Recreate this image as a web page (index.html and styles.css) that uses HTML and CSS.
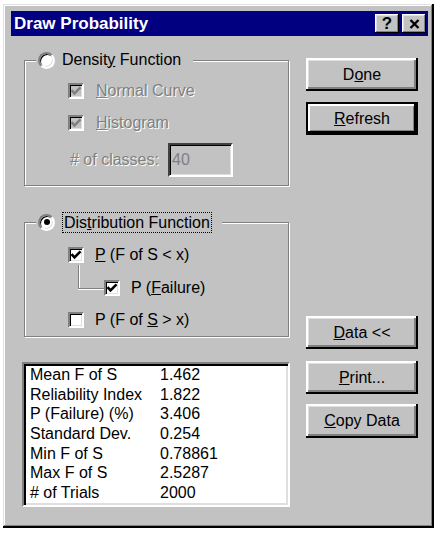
FILE: index.html
```html
<!DOCTYPE html>
<html lang="en">
<head>
    <meta charset="UTF-8">
    <meta name="viewport" content="width=device-width, initial-scale=1.0">
    <title>Draw Probability</title>
    <link rel="stylesheet" href="styles.css">
</head>
<body>
    <div class="dialog">
        <div class="titlebar">
            <span class="title">Draw Probability</span>
            <div class="title-buttons">
                <span class="tbtn">?</span>
                <span class="tbtn">
                    <svg width="11" height="10" viewBox="0 0 11 10"><path d="M1.5 1 L9.5 9 M9.5 1 L1.5 9" stroke="#000" stroke-width="2.4"/></svg>
                </span>
            </div>
        </div>

        <div class="content">
            <div class="left">
                <!-- density group (disabled) -->
                <div class="group group-density">
                    <div class="group-title">
                        <span class="radio"></span>
                        <span>Densit<u>y</u> Function</span>
                    </div>
                    <div class="check-row disabled row-first">
                        <span class="check"><svg width="12" height="12" viewBox="0 0 12 12"><polyline points="1.5,5.2 4.5,8.4 10.5,2.4" fill="none" stroke-width="2.6"/></svg></span>
                        <span class="label"><u>N</u>ormal Curve</span>
                    </div>
                    <div class="check-row disabled row-second">
                        <span class="check"><svg width="12" height="12" viewBox="0 0 12 12"><polyline points="1.5,5.2 4.5,8.4 10.5,2.4" fill="none" stroke-width="2.6"/></svg></span>
                        <span class="label"><u>H</u>istogram</span>
                    </div>
                    <div class="classes-row">
                        <span class="label">#&nbsp;of classes:</span>
                        <span class="textbox">40</span>
                    </div>
                </div>

                <!-- distribution group -->
                <div class="group group-dist">
                    <div class="group-title">
                        <span class="radio checked"></span>
                        <span class="focus">Dis<u>t</u>ribution Function</span>
                    </div>
                    <div class="check-row dist-first">
                        <span class="check"><svg width="12" height="12" viewBox="0 0 12 12"><polyline points="1.5,5.2 4.5,8.4 10.5,2.4" fill="none" stroke-width="2.6"/></svg></span>
                        <span class="label"><u>P</u> (F of S &lt; x)</span>
                    </div>
                    <div class="check-row sub-row">
                        <span class="tree-line"></span>
                        <span class="check"><svg width="12" height="12" viewBox="0 0 12 12"><polyline points="1.5,5.2 4.5,8.4 10.5,2.4" fill="none" stroke-width="2.6"/></svg></span>
                        <span class="label">P (<u>F</u>ailure)</span>
                    </div>
                    <div class="check-row dist-last">
                        <span class="check"></span>
                        <span class="label">P (F of <u>S</u> &gt; x)</span>
                    </div>
                </div>

                <div class="results">
                    <span>Mean F of S</span><span>1.462</span>
                    <span>Reliability Index</span><span>1.822</span>
                    <span>P (Failure) (%)</span><span>3.406</span>
                    <span>Standard Dev.</span><span>0.254</span>
                    <span>Min F of S</span><span>0.78861</span>
                    <span>Max F of S</span><span>2.5287</span>
                    <span># of Trials</span><span>2000</span>
                </div>
            </div>

            <div class="right">
                <button class="btn">D<u>o</u>ne</button>
                <button class="btn btn-default btn-refresh"><u>R</u>efresh</button>
                <button class="btn btn-data"><u>D</u>ata &lt;&lt;</button>
                <button class="btn btn-print"><u>P</u>rint...</button>
                <button class="btn btn-copy"><u>C</u>opy Data</button>
            </div>
        </div>
    </div>
</body>
</html>
```

FILE: styles.css
```css
body {
    margin: 0;
    background: #fff;
    font-family: "Liberation Sans", Arial, sans-serif;
    font-size: 16px;
    color: #000;
}

.dialog {
    width: 431px;
    height: 524px;
    margin: 4px 0 0 3px;
    box-sizing: border-box;
    padding: 7px 6px 0 8px;
    background: #c2c2c2;
    box-shadow: inset -2px -2px #000, inset 1px 1px #dfdfdf, inset -3px -3px #808080, inset 2px 2px #fff;
}

/* title bar */
.titlebar {
    display: flex;
    align-items: center;
    justify-content: space-between;
    height: 25px;
    padding: 0 2px 0 3px;
    background: #000080;
    color: #fff;
}

.title {
    font-weight: bold;
    font-size: 17px;
}

.title-buttons {
    display: flex;
    gap: 3px;
}

.tbtn {
    width: 24px;
    height: 19px;
    display: flex;
    align-items: center;
    justify-content: center;
    background: #c2c2c2;
    color: #000;
    font-weight: bold;
    font-size: 17px;
    box-shadow: inset -1px -1px #000, inset 1px 1px #fff, inset -2px -2px #808080, inset 2px 2px #dfdfdf;
}

.content {
    display: flex;
    padding-left: 11px;
}

.left {
    width: 268px;
    display: flex;
    flex-direction: column;
}

/* etched group boxes */
.group {
    width: 265px;
    margin-left: 2px;
    box-sizing: border-box;
    border: 1px solid #808080;
    box-shadow: inset 1px 1px #fff, 1px 1px #fff;
    display: flex;
    flex-direction: column;
    align-items: flex-start;
}

.group-density {
    margin-top: 24px;
    padding-bottom: 8px;
}

.group-dist {
    margin-top: 36px;
    padding-bottom: 6px;
}

.group-title {
    display: flex;
    align-items: center;
    height: 20px;
    margin: -11px 0 0 11px;
    padding: 0 12px 0 2px;
    background: #c2c2c2;
}

.group-dist .group-title {
    padding-right: 10px;
}

.focus {
    border: 1px dotted #000;
    padding: 0 1px;
    line-height: 19px;
}

.radio {
    width: 17px;
    height: 17px;
    box-sizing: border-box;
    flex-shrink: 0;
    margin-right: 7px;
    border-radius: 50%;
    border: 2px solid;
    border-color: #808080 #fff #fff #808080;
    background: #fff;
    box-shadow: inset 1px 1px #000, inset -1px -1px #dfdfdf;
    display: flex;
    align-items: center;
    justify-content: center;
}

.radio.checked::after {
    content: "";
    width: 6px;
    height: 6px;
    border-radius: 50%;
    background: #000;
}

/* checkboxes */
.check-row {
    display: flex;
    align-items: center;
    height: 20px;
    margin-left: 43px;
}

.check {
    width: 16px;
    height: 16px;
    box-sizing: border-box;
    flex-shrink: 0;
    margin-right: 12px;
    border: 2px solid;
    border-color: #808080 #fff #fff #808080;
    background: #fff;
    box-shadow: inset 1px 1px #000, inset -1px -1px #dfdfdf;
    display: flex;
    align-items: center;
    justify-content: center;
}

.check svg {
    stroke: #000;
}

.disabled .check {
    background: #c2c2c2;
}

.disabled .check svg {
    stroke: #808080;
}

.disabled .label,
.classes-row .label {
    color: #808080;
    text-shadow: 1px 1px #fff;
}

.row-first { margin-top: 11px; }
.row-second { margin-top: 12px; }
.dist-first { margin-top: 13px; }
.dist-last { margin-top: 12px; }

.dist-first .check,
.dist-last .check {
    margin-right: 11px;
}

.sub-row {
    margin-top: 13px;
    margin-left: 53px;
}

.sub-row .check {
    margin-right: 11px;
}

.tree-line {
    align-self: flex-start;
    width: 26px;
    height: 24px;
    margin-top: -13px;
    box-sizing: border-box;
    border-left: 1px solid #808080;
    border-bottom: 1px solid #808080;
    box-shadow: inset 1px 0 #fff, 0 1px #fff;
}

.classes-row {
    display: flex;
    align-items: center;
    margin: 10px 0 0 45px;
}

.classes-row .label {
    width: 98px;
}

.textbox {
    width: 65px;
    height: 34px;
    box-sizing: border-box;
    padding-left: 2px;
    border: 2px solid;
    border-color: #404040 #fff #fff #404040;
    box-shadow: inset 1px 1px #000, inset -1px -1px #dfdfdf;
    color: #808080;
    display: flex;
    align-items: center;
}

/* results list */
.results {
    margin-top: 25px;
    height: 145px;
    box-sizing: border-box;
    padding: 1px 0 0 6px;
    background: #fff;
    border: 2px solid;
    border-color: #808080 #fff #fff #808080;
    box-shadow: inset 2px 2px #000, inset -2px -2px #dfdfdf;
    display: grid;
    grid-template-columns: 130px auto;
    grid-auto-rows: 19.7px;
    align-content: start;
    line-height: 19.7px;
}

/* buttons */
.right {
    width: 112px;
    margin-left: 16px;
    padding-top: 22px;
    display: flex;
    flex-direction: column;
}

.btn {
    height: 33px;
    padding: 0;
    border: none;
    background: #c2c2c2;
    font: inherit;
    color: #000;
    box-shadow: inset -2px -2px #000, inset 2px 2px #fff, inset -4px -4px #808080, inset 3px 3px #dfdfdf;
}

.btn-default {
    box-shadow: inset 0 0 0 2px #000, inset -4px -4px #000, inset 4px 4px #fff, inset -5px -5px #808080;
}

.btn-refresh { margin-top: 11px; }
.btn-data { margin-top: 181px; }
.btn-print { margin-top: 12px; }
.btn-copy { margin-top: 10px; height: 34px; }
```
